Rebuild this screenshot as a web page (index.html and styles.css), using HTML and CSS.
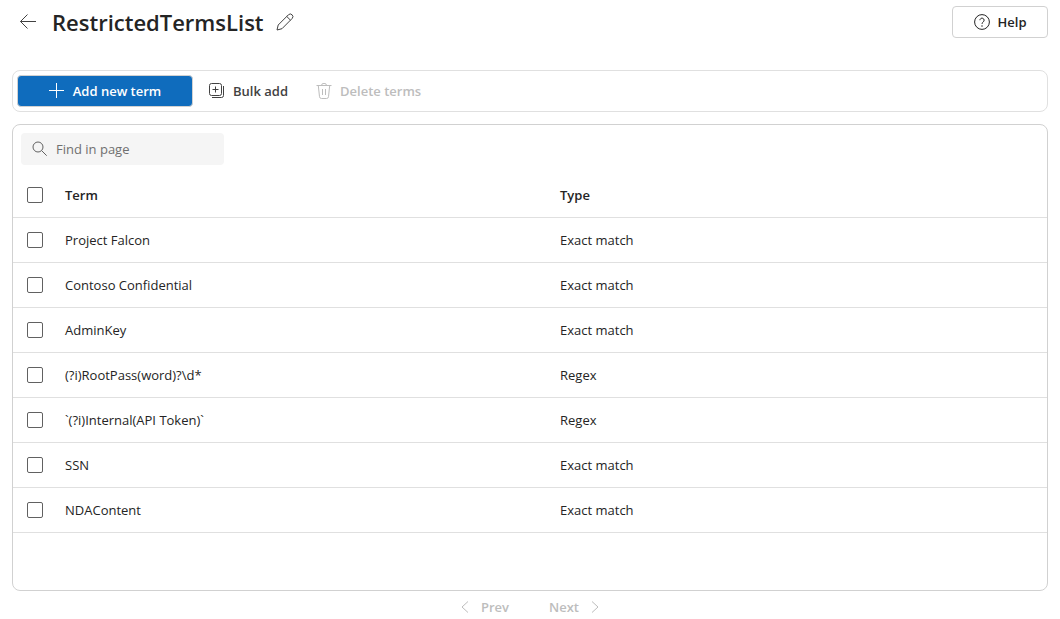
FILE: index.html
```html
<!DOCTYPE html>
<html lang="en">
<head>
<meta charset="utf-8">
<meta name="viewport" content="width=device-width, initial-scale=1">
<title>RestrictedTermsList</title>
<link rel="stylesheet" href="styles.css">
</head>
<body>
<main class="page">
  <header class="header">
    <button class="icon-button" type="button" aria-label="Back">
      <svg class="icon" viewBox="0 0 16 16"><path d="M16 7.500H.5M7.500.5l-7 7 7 7"/></svg>
    </button>
    <h1 class="title">RestrictedTermsList</h1>
    <button class="icon-button" type="button" aria-label="Edit name">
      <svg class="icon icon-large" viewBox="0 0 18 18"><path d="M1 17l1.200-5L12.400 1.800a2.550 2.550 0 0 1 3.700 3.700L6 15.700zM10.800 3.500l3.700 3.700"/></svg>
    </button>
    <button class="help" type="button">
      <svg class="icon" viewBox="0 0 16 16"><circle cx="8" cy="8" r="7.400"/><path d="M5.900 6.200a2.100 2.100 0 1 1 3.500 1.600C8.600 8.500 8 8.800 8 9.900"/><circle class="dot" cx="8" cy="11.900" r=".75"/></svg>
      Help
    </button>
  </header>

  <div class="toolbar" role="toolbar" aria-label="Term actions">
    <button class="command primary" type="button">
      <svg class="icon" viewBox="0 0 16 16"><path d="M7.500 0v15M0 7.500h15"/></svg>
      Add new term
    </button>
    <button class="command" type="button">
      <svg class="icon" viewBox="0 0 16 16"><rect x=".5" y=".5" width="12" height="12" rx="2"/><path d="M6.500 3.500v6M3.500 6.500h6M14.500 3v9.500a2 2 0 0 1-2 2H3"/></svg>
      Bulk add
    </button>
    <button class="command" type="button" disabled>
      <svg class="icon" viewBox="0 0 16 16"><path d="M.5 2.500h15M5.500 2.500a2.500 2.200 0 0 1 5 0M2.300 2.500l1.200 11.200a2 2 0 0 0 2 1.800h5a2 2 0 0 0 2-1.800l1.200-11.200M6.500 6v6M9.500 6v6"/></svg>
      Delete terms
    </button>
  </div>

  <section class="card">
    <label class="search">
      <svg class="icon" viewBox="0 0 16 16"><circle cx="6" cy="6" r="5"/><path d="M9.700 9.700l5 5"/></svg>
      <input class="search-input" type="search" placeholder="Find in page" aria-label="Find in page">
    </label>
    <table class="terms">
      <colgroup><col class="select-column"><col><col></colgroup>
      <thead>
        <tr><th scope="col"><input class="check" type="checkbox" aria-label="Select all terms"></th><th scope="col">Term</th><th scope="col">Type</th></tr>
      </thead>
      <tbody>
        <tr><td><input class="check" type="checkbox" aria-label="Select Project Falcon"></td><td>Project Falcon</td><td>Exact match</td></tr>
        <tr><td><input class="check" type="checkbox" aria-label="Select Contoso Confidential"></td><td>Contoso Confidential</td><td>Exact match</td></tr>
        <tr><td><input class="check" type="checkbox" aria-label="Select AdminKey"></td><td>AdminKey</td><td>Exact match</td></tr>
        <tr><td><input class="check" type="checkbox" aria-label="Select RootPass pattern"></td><td>(?i)RootPass(word)?\d*</td><td>Regex</td></tr>
        <tr><td><input class="check" type="checkbox" aria-label="Select Internal API Token pattern"></td><td>`(?i)Internal(API Token)`</td><td>Regex</td></tr>
        <tr><td><input class="check" type="checkbox" aria-label="Select SSN"></td><td>SSN</td><td>Exact match</td></tr>
        <tr><td><input class="check" type="checkbox" aria-label="Select NDAContent"></td><td>NDAContent</td><td>Exact match</td></tr>
      </tbody>
    </table>
  </section>

  <nav class="pager" aria-label="Pages">
    <button class="page-button" type="button" disabled>
      <svg class="icon chevron" viewBox="0 0 8 12"><path d="M7 .5L1 6l6 5.500"/></svg>
      Prev
    </button>
    <button class="page-button" type="button" disabled>
      Next
      <svg class="icon chevron" viewBox="0 0 8 12"><path d="M1 .5L7 6l-6 5.500"/></svg>
    </button>
  </nav>
</main>
</body>
</html>
```
FILE: styles.css
```css
* {
  box-sizing: border-box;
}

body {
  margin: 0;
  background: #fff;
  color: #242424;
  font-family: "Open Sans", "Noto Sans", sans-serif;
  font-size: 13px;
  line-height: 20px;
}

button,
input {
  margin: 0;
  font: inherit;
  color: inherit;
}

button {
  display: flex;
  align-items: center;
  justify-content: center;
  padding: 0;
  border: 0;
  background: none;
  font-weight: 600;
  white-space: nowrap;
}

.page {
  display: flex;
  flex-direction: column;
  min-height: 100vh;
  padding: 6px 12px 0;
}

.icon {
  flex: none;
  width: 16px;
  height: 16px;
  fill: none;
  stroke: currentColor;
}

.icon-large {
  width: 18px;
  height: 18px;
}

.chevron {
  width: 8px;
  height: 12px;
}

.dot {
  fill: currentColor;
  stroke: none;
}

.header {
  display: flex;
  align-items: center;
  margin-bottom: 32px;
  padding-left: 8px;
}

.icon-button {
  color: #424242;
}

.title {
  margin: 0 12px 0 16px;
  font-size: 22px;
  font-weight: 600;
  line-height: 32px;
}

.help {
  gap: 8px;
  width: 96px;
  height: 32px;
  margin-left: auto;
  border: 1px solid #d1d1d1;
  border-radius: 4px;
  background: #fff;
}

.toolbar {
  display: flex;
  gap: 16px;
  margin-bottom: 12px;
  padding: 4px;
  border: 1px solid #e0e0e0;
  border-radius: 8px;
}

.command {
  gap: 8px;
  height: 32px;
  color: #424242;
}

.command:disabled {
  margin-left: 12px;
  color: #bdbdbd;
}

.primary {
  width: 176px;
  border: 1px solid #d1d1d1;
  border-radius: 4px;
  background: #0f6cbd;
  color: #fff;
}

.card {
  flex: 1;
  border: 1px solid #d1d1d1;
  border-radius: 8px;
}

.search {
  display: flex;
  align-items: center;
  gap: 8px;
  width: 203px;
  height: 32px;
  margin: 8px;
  padding: 0 11px;
  border-radius: 4px;
  background: #f5f5f5;
  color: #616161;
}

.search-input {
  min-width: 0;
  flex: 1;
  padding: 0;
  border: 0;
  outline: 0;
  background: none;
}

.search-input::placeholder {
  color: #707070;
}

.terms {
  width: 100%;
  border-collapse: separate;
  border-spacing: 0;
  table-layout: fixed;
}

.select-column {
  width: 44px;
}

.terms th,
.terms td {
  height: 45px;
  padding: 0 8px;
  border-bottom: 1px solid #e0e0e0;
  text-align: left;
  font-weight: 400;
}

.terms th {
  font-weight: 600;
}

.terms th:first-child,
.terms td:first-child {
  padding: 0 0 0 14px;
}

.check {
  display: block;
  width: 16px;
  height: 16px;
  border: 1px solid #616161;
  border-radius: 2px;
  background: #fff;
  appearance: none;
}

.check:checked {
  background: #0f6cbd;
}

.pager {
  display: flex;
  justify-content: center;
  gap: 40px;
  padding: 6px 0 2px;
}

.page-button {
  gap: 12px;
  color: #bdbdbd;
}
```
